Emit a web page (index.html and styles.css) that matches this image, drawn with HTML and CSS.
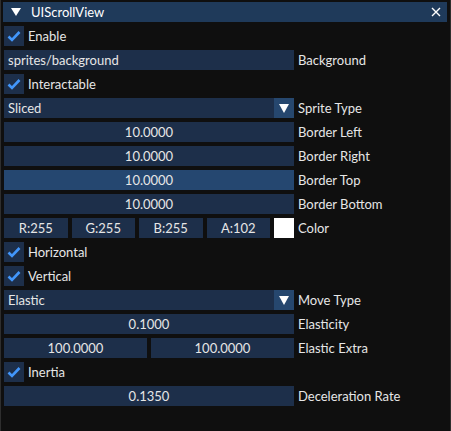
FILE: index.html
```html
<!DOCTYPE html>
<html>
<head>
<meta charset="utf-8">
<link rel="stylesheet" href="styles.css">
</head>
<body>
<div class="window">
  <div class="header">
    <svg class="tri" width="10" height="8" viewBox="0 0 10 8"><polygon points="0,0 10,0 5,8" fill="#fff"/></svg>
    <span class="title">UIScrollView</span>
    <svg class="close" width="10" height="10" viewBox="0 0 10 10"><path d="M1 1L9 9M9 1L1 9" stroke="#fff" stroke-width="1.4"/></svg>
  </div>
  <div class="body">
    <div class="row"><span class="check"><svg width="14" height="12" viewBox="0 0 14 12"><path d="M1.5 6.5L5 10L12.5 2" fill="none" stroke="#4296fa" stroke-width="2.6"/></svg></span><span class="label">Enable</span></div>
    <div class="row"><div class="field left">sprites/background</div><span class="label">Background</span></div>
    <div class="row"><span class="check"><svg width="14" height="12" viewBox="0 0 14 12"><path d="M1.5 6.5L5 10L12.5 2" fill="none" stroke="#4296fa" stroke-width="2.6"/></svg></span><span class="label">Interactable</span></div>
    <div class="row"><div class="field left combo"><span class="ctext">Sliced</span><span class="arrow"><svg width="10" height="9" viewBox="0 0 10 9"><polygon points="0,0 10,0 5,9" fill="#fff"/></svg></span></div><span class="label">Sprite Type</span></div>
    <div class="row"><div class="field">10.0000</div><span class="label">Border Left</span></div>
    <div class="row"><div class="field">10.0000</div><span class="label">Border Right</span></div>
    <div class="row"><div class="field hover">10.0000</div><span class="label">Border Top</span></div>
    <div class="row"><div class="field">10.0000</div><span class="label">Border Bottom</span></div>
    <div class="row"><div class="multi"><div class="sub">R:255</div><div class="sub">G:255</div><div class="sub">B:255</div><div class="sub">A:102</div><div class="swatch"></div></div><span class="label">Color</span></div>
    <div class="row"><span class="check"><svg width="14" height="12" viewBox="0 0 14 12"><path d="M1.5 6.5L5 10L12.5 2" fill="none" stroke="#4296fa" stroke-width="2.6"/></svg></span><span class="label">Horizontal</span></div>
    <div class="row"><span class="check"><svg width="14" height="12" viewBox="0 0 14 12"><path d="M1.5 6.5L5 10L12.5 2" fill="none" stroke="#4296fa" stroke-width="2.6"/></svg></span><span class="label">Vertical</span></div>
    <div class="row"><div class="field left combo"><span class="ctext">Elastic</span><span class="arrow"><svg width="10" height="9" viewBox="0 0 10 9"><polygon points="0,0 10,0 5,9" fill="#fff"/></svg></span></div><span class="label">Move Type</span></div>
    <div class="row"><div class="field">0.1000</div><span class="label">Elasticity</span></div>
    <div class="row"><div class="multi"><div class="sub">100.0000</div><div class="sub">100.0000</div></div><span class="label">Elastic Extra</span></div>
    <div class="row"><span class="check"><svg width="14" height="12" viewBox="0 0 14 12"><path d="M1.5 6.5L5 10L12.5 2" fill="none" stroke="#4296fa" stroke-width="2.6"/></svg></span><span class="label">Inertia</span></div>
    <div class="row"><div class="field">0.1350</div><span class="label">Deceleration Rate</span></div>
  </div>
</div>
</body>
</html>
```
FILE: styles.css
```css
* { box-sizing: border-box; }
html, body { margin: 0; padding: 0; background: #0f0f0f; }
body {
  font-family: "Lato", "Noto Sans", sans-serif;
  font-size: 13px;
  color: #e6e6e6;
}
.window {
  width: 451px;
  height: 431px;
  padding: 2px 3px 0 2px;
  background: #0f0f0f;
  border-left: 1px solid #2e2e2e;
  border-right: 1px solid #2e2e2e;
  position: relative;
}
.header {
  height: 20px;
  background: #1f3a5a;
  display: flex;
  align-items: center;
  padding-left: 8px;
  color: #fff;
}
.tri { margin-right: 10px; margin-left: 0; }
.title { flex: 1; font-size: 13px; }
.close { margin-right: 6px; }
.body { padding-left: 1px; }
.row {
  display: flex;
  align-items: center;
  height: 20px;
  margin-top: 4px;
  gap: 4px;
}
.check {
  width: 20px;
  height: 20px;
  background: #1d2f4a;
  display: flex;
  align-items: center;
  justify-content: center;
}
.label { white-space: nowrap; }
.field {
  width: 290px;
  height: 20px;
  background: #1d2f4a;
  display: flex;
  align-items: center;
  justify-content: center;
  white-space: nowrap;
}
.field.left { justify-content: flex-start; padding-left: 4px; }
.field.hover { background: #254770; }
.combo { padding-right: 0; }
.ctext { flex: 1; }
.arrow {
  width: 20px;
  height: 20px;
  background: #26476e;
  display: flex;
  align-items: center;
  justify-content: center;
}
.multi {
  width: 290px;
  height: 20px;
  display: flex;
  gap: 4px;
}
.sub {
  flex: 1;
  background: #1d2f4a;
  display: flex;
  align-items: center;
  justify-content: center;
}
.swatch {
  width: 20px;
  height: 20px;
  background: #ffffff;
  flex: none;
}
```
